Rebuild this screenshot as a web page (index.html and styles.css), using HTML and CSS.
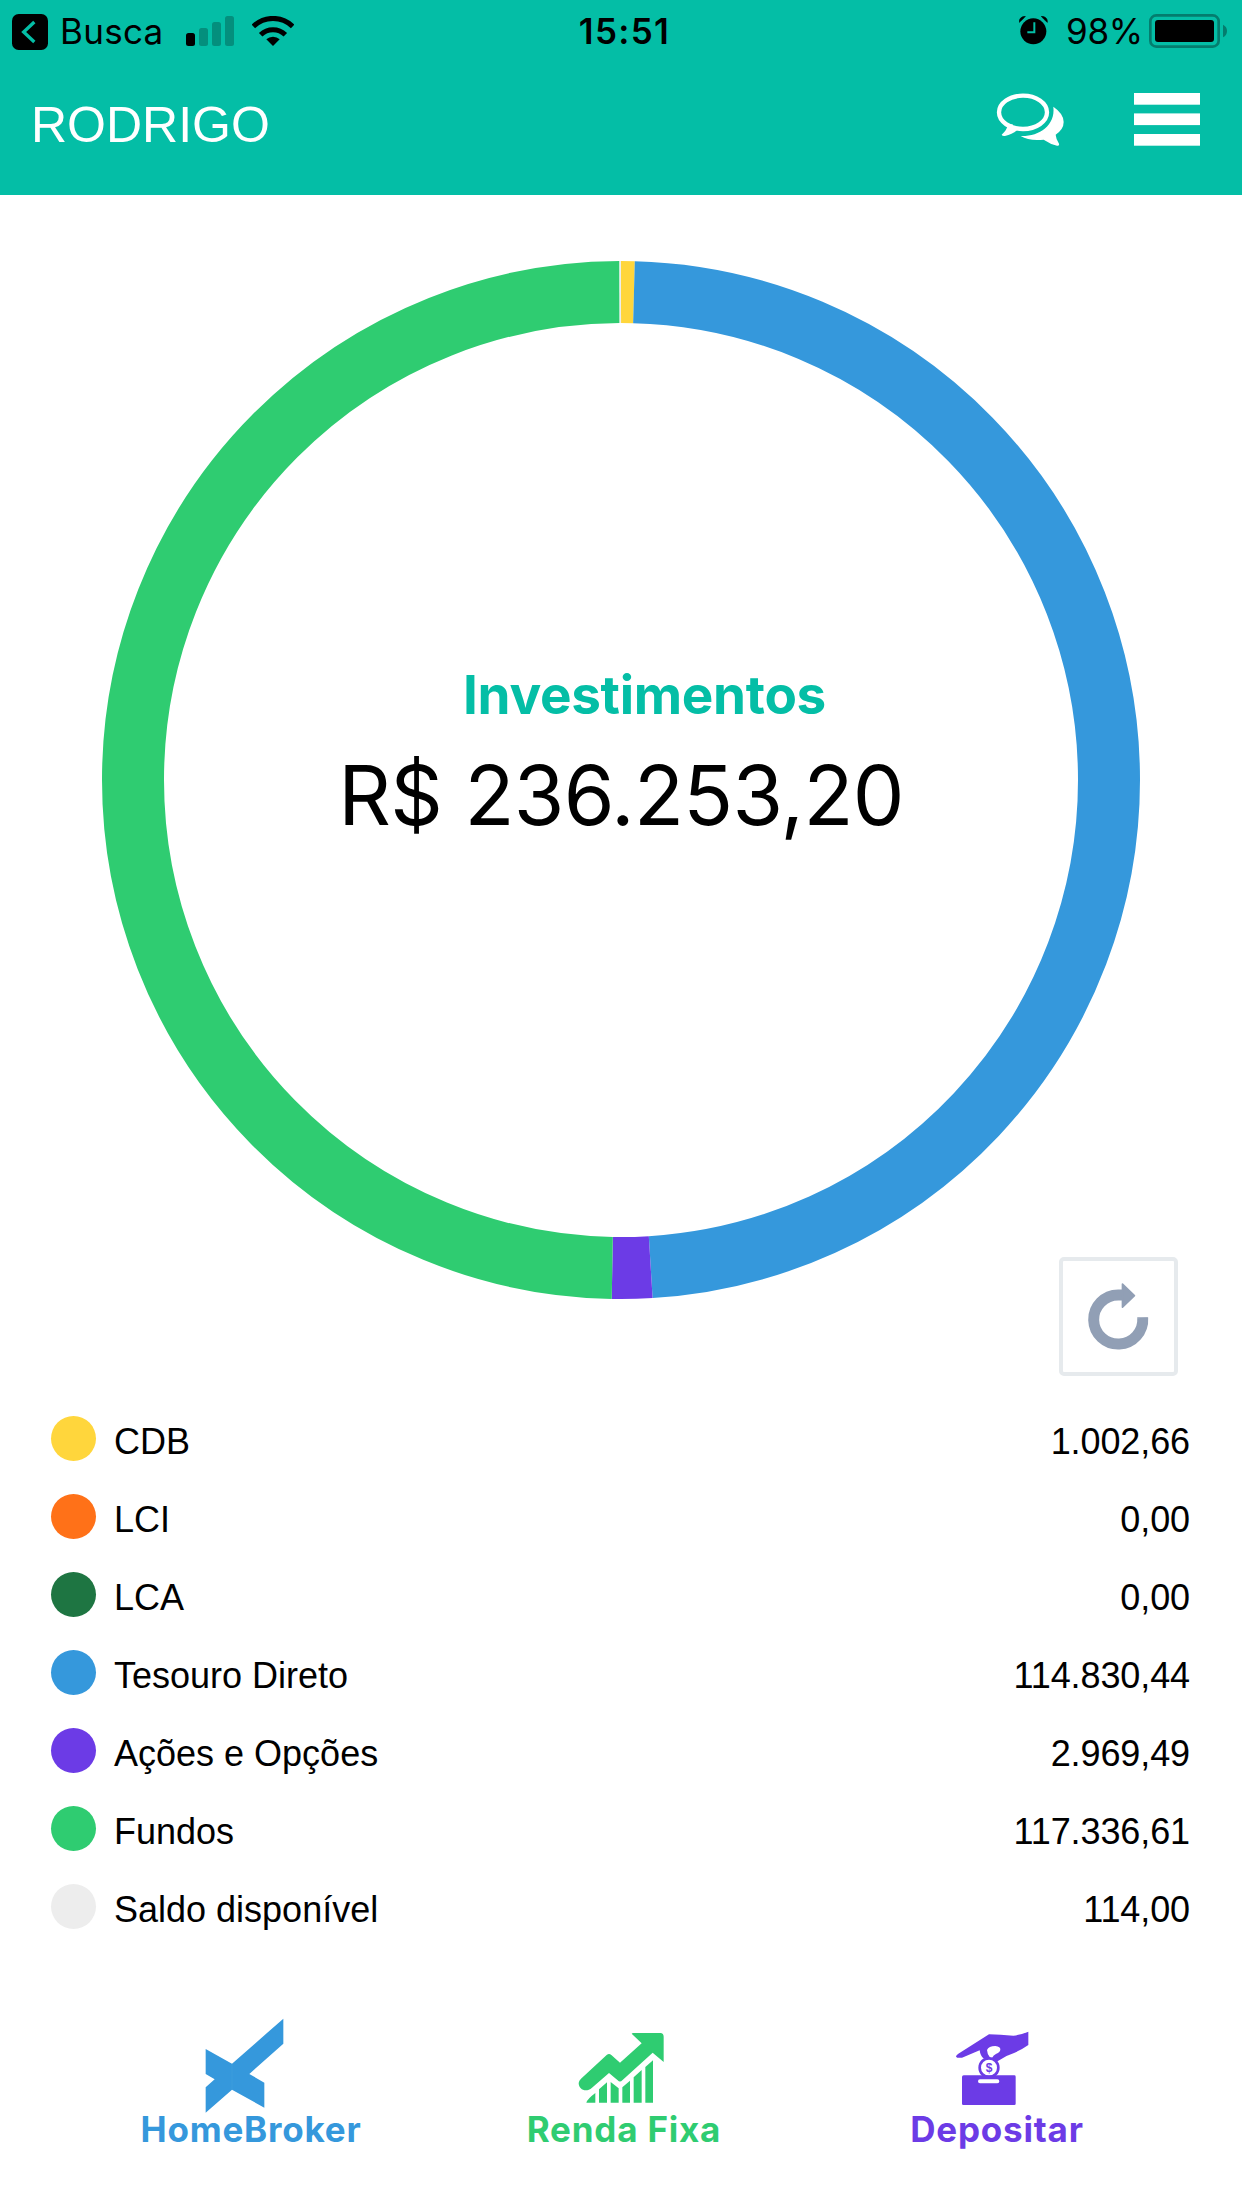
FILE: index.html
```html
<!DOCTYPE html>
<html lang="pt-BR">
<head>
    <meta charset="UTF-8">
    <meta name="viewport" content="width=device-width, initial-scale=1.0">
    <title>Investimentos</title>
    <link rel="stylesheet" href="styles.css">
</head>
<body>

    <!-- Topo -->
    <header class="header">
        <div class="status">
            <div class="status-left">
                <svg class="back" viewBox="0 0 108 108">
                    <rect width="108" height="108" rx="20"/>
                    <path d="M67 24L35 54L67 84" fill="none" stroke="#04bea6" stroke-width="10"/>
                </svg>
                <span class="back-text">Busca</span>
                <svg class="signal" viewBox="0 0 48 30">
                    <rect y="17" width="9" height="13" rx="2.5"/>
                    <g fill="#048f7d">
                        <rect x="13" y="12" width="9" height="18" rx="2.5"/>
                        <rect x="26" y="6" width="9" height="24" rx="2.5"/>
                        <rect x="39" y="0" width="9" height="30" rx="2.5"/>
                    </g>
                </svg>
                <svg class="wifi" viewBox="756 45 126 90">
                    <path d="M760 76A85 85 0 0 1 878 76M782 101A53 53 0 0 1 856 101" fill="none" stroke="#000" stroke-width="15"/>
                    <path d="M819 135L799 115A29 29 0 0 1 839 115Z"/>
                </svg>
            </div>
            <span class="time">15:51</span>
            <div class="status-right">
                <svg class="alarm" viewBox="206 47 87 87">
                    <circle cx="249" cy="93" r="39"/>
                    <path d="M207 66Q206 49 225 48Q218 57 207 66ZM291 66Q292 49 273 48Q280 57 291 66Z" stroke="#000" stroke-width="2"/>
                    <path d="M252 66V96H231" fill="none" stroke="#04bea6" stroke-width="6"/>
                </svg>
                <span class="percent">98%</span>
                <svg class="battery" viewBox="597 39 234 102">
                    <rect x="601" y="43" width="205" height="94" rx="18" fill="none" stroke="#047d6e" stroke-width="8"/>
                    <rect x="615" y="57" width="177" height="66" rx="9"/>
                    <path d="M819 71Q831 77 831 90Q831 103 819 109Z" fill="#047d6e"/>
                </svg>
            </div>
        </div>
        <div class="topbar">
            <h1>RODRIGO</h1>
            <svg class="chat" viewBox="126 270 240 180" fill="#fff">
                <ellipse cx="219" cy="340" rx="72" ry="50" fill="none" stroke="#fff" stroke-width="13"/>
                <path d="M174 376Q171 394 155 407Q157 412 165 411Q186 407 201 394L189 384L188 376Z"/>
                <path d="M310 323Q341 344 341 369Q341 391 317 407Q318 421 327 434Q329 440 321 440Q302 436 281 422Q238 427 212 411C265 413 317 381 310 323Z"/>
            </svg>
            <svg class="menu" viewBox="0 0 66 53" fill="#fff">
                <rect width="66" height="11.7"/>
                <rect y="20.4" width="66" height="11.7"/>
                <rect y="41" width="66" height="11.7"/>
            </svg>
        </div>
    </header>

    <!-- Gráfico -->
    <main class="chart">
        <svg class="donut" viewBox="-519 -519 1038 1038">
            <g fill="none" stroke-width="62" transform="rotate(-90)">
                <circle r="488" pathLength="236253.2" stroke="#ffd63c" stroke-dasharray="1002.66 236253.2"/>
                <circle r="488" pathLength="236253.2" stroke="#3598dc" stroke-dasharray="114830.44 236253.2" stroke-dashoffset="-1002.66"/>
                <circle r="488" pathLength="236253.2" stroke="#6c3be6" stroke-dasharray="2969.49 236253.2" stroke-dashoffset="-115833.1"/>
                <circle r="488" pathLength="236253.2" stroke="#2fcc71" stroke-dasharray="117336.61 236253.2" stroke-dashoffset="-118802.59"/>
                <circle r="488" pathLength="236253.2" stroke="#ededed" stroke-dasharray="114 236253.2" stroke-dashoffset="-236139.2"/>
            </g>
        </svg>
        <div class="total">
            <h2>Investimentos</h2>
            <p>R$ 236.253,20</p>
        </div>
        <button class="refresh" aria-label="Atualizar">
            <svg viewBox="166 150 200 220">
                <path d="M339 264A74 74 0 1 1 265 195H280" fill="none" stroke="#919fb5" stroke-width="33"/>
                <path d="M324 264H353" stroke="#919fb5" stroke-width="4" stroke-linecap="round"/>
                <path d="M278 162L314 197L278 232Z" fill="#919fb5" stroke="#919fb5" stroke-width="5" stroke-linejoin="round"/>
            </svg>
        </button>
    </main>

    <!-- Lista -->
    <ul class="list">
        <li><i class="dot cdb"></i><span>CDB</span><b>1.002,66</b></li>
        <li><i class="dot lci"></i><span>LCI</span><b>0,00</b></li>
        <li><i class="dot lca"></i><span>LCA</span><b>0,00</b></li>
        <li><i class="dot tesouro"></i><span>Tesouro Direto</span><b>114.830,44</b></li>
        <li><i class="dot acoes"></i><span>Ações e Opções</span><b>2.969,49</b></li>
        <li><i class="dot fundos"></i><span>Fundos</span><b>117.336,61</b></li>
        <li><i class="dot saldo"></i><span>Saldo disponível</span><b>114,00</b></li>
    </ul>

    <!-- Menu inferior -->
    <nav class="nav">
        <a class="homebroker">
            <svg viewBox="213 42 360 300">
                <path d="M257 147L336 191L490 56V131L388 222L433 248V323L336 269L257 338V262L284 238L257 222Z"/>
                <path d="M336 191V269" stroke="#4aa3e0"/>
            </svg>
            <span>HomeBroker</span>
        </a>
        <a class="renda">
            <svg viewBox="162 42 360 300">
                <path d="M213 236L290 165Q297 159 304 165L330 188L395 130L365 101Q366 99 370 99H451Q461 100 461 110V186L428 158L337 241Q330 248 323 241L297 219L246 263C229 279 206 269 206 249Q207 241 213 236Z"/>
                <path d="M229 308Q232 297 256 279V308ZM267 308V268L291 247V308ZM302 308V246L326 265V308ZM337 308V262L360 242V308ZM371 308V232L395 210V308ZM406 308V201L429 181V308Z"/>
            </svg>
            <span>Renda Fixa</span>
        </a>
        <a class="depositar">
            <svg viewBox="141 42 360 300">
                <path d="M198 170Q198 165 205 161L297 103Q330 104 370 107Q394 104 415 95V135Q395 149 374 158Q347 166 320 185L299 180L280 175Q271 167 269 151L216 173Q201 175 198 170Z"/>
                <path d="M301 174Q291 162 291 150Q296 138 316 138Q332 140 331 149Q330 157 319 161Q310 165 306 174Z" fill="#fff"/>
                <circle cx="297" cy="203" r="28" fill="#fff" stroke="#6c3be6" stroke-width="8"/>
                <text x="297" y="216" class="coin">$</text>
                <path fill-rule="evenodd" d="M221 226H373Q377 226 377 230V311Q377 315 373 315H220Q216 315 216 311V231Q216 226 221 226ZM270 238Q264 238 264 244Q264 250 270 250H322Q328 250 328 244Q328 238 322 238Z"/>
            </svg>
            <span>Depositar</span>
        </a>
    </nav>

</body>
</html>
```
FILE: styles.css
```css
/* Estilo global */
* {
    margin: 0;
    padding: 0;
    box-sizing: border-box;
}

body {
    font-family: Inter, "Liberation Sans", sans-serif;
    background-color: #fff;
    color: #000;
    width: 1242px;
    height: 2208px;
    overflow: hidden;
}

svg {
    display: block;
    flex-shrink: 0;
}

/* Topo */
.header {
    height: 195px;
    background-color: #04bea6;
}

.status {
    display: grid;
    grid-template-columns: 1fr auto 1fr;
    align-items: center;
    height: 62px;
    padding: 0 15px 0 12px;
    font-size: 35px;
    line-height: 62px;
}

.status-left,
.status-right {
    display: flex;
    align-items: center;
}

.status-right {
    justify-content: flex-end;
}

.back {
    width: 36px;
    height: 36px;
    margin: 2px 12px 0 0;
}

.back-text {
    width: 126px;
    letter-spacing: 0.3px;
}

.signal {
    width: 48px;
    height: 30px;
    margin-right: 18px;
}

.wifi {
    width: 42px;
    height: 30px;
}

.time {
    font-weight: 600;
    letter-spacing: 1.3px;
    padding-left: 10px;
}

.alarm {
    width: 29px;
    height: 29px;
    margin: 0 18px 2px 0;
}

.percent {
    margin-right: 6px;
    letter-spacing: -0.2px;
}

.battery {
    width: 78px;
    height: 34px;
}

.topbar {
    display: flex;
    align-items: center;
    height: 114px;
    padding: 0 42px 0 31px;
}

.topbar h1 {
    flex: 1;
    font: 50px "Liberation Sans", Arial, sans-serif;
    color: #fff;
    padding-top: 11px;
}

.chat {
    width: 80px;
    height: 60px;
    margin-right: 62px;
}

.menu {
    width: 66px;
    height: 53px;
}

/* Gráfico */
.chart {
    position: relative;
    height: 1207px;
    padding: 66px 102px 0;
}

.donut {
    width: 1038px;
    height: 1038px;
}

.total {
    position: absolute;
    top: 464px;
    left: 0;
    width: 100%;
    text-align: center;
}

.total h2 {
    font-size: 53px;
    font-weight: 700;
    line-height: 72px;
    letter-spacing: -0.3px;
    padding-left: 47px;
    color: #04bea6;
}

.total p {
    font-size: 82px;
    line-height: 130px;
    letter-spacing: -0.7px;
}

.refresh {
    position: absolute;
    top: 1062px;
    right: 64px;
    display: flex;
    align-items: center;
    justify-content: center;
    width: 119px;
    height: 119px;
    background-color: #fff;
    border: 4px solid #e6eaed;
    border-radius: 5px;
}

.refresh svg {
    width: 67px;
    height: 73px;
}

/* Lista */
.list {
    list-style: none;
    padding: 0 52px 0 51px;
    font: 36px "Liberation Sans", Arial, sans-serif;
}

.list li {
    display: flex;
    align-items: center;
    height: 78px;
}

.list span {
    flex: 1;
    padding-top: 2px;
}

.list b {
    font-weight: normal;
    padding-top: 2px;
    letter-spacing: -0.1px;
}

.dot {
    width: 45px;
    height: 45px;
    margin: 0 18px 6px 0;
    border-radius: 50%;
}

.cdb { background-color: #ffd63c; }
.lci { background-color: #ff7118; }
.lca { background-color: #1e7542; }
.tesouro { background-color: #3598dc; }
.acoes { background-color: #6c3be6; }
.fundos { background-color: #2fcc71; }
.saldo { background-color: #ededed; }

/* Menu inferior */
.nav {
    display: grid;
    grid-template-columns: repeat(3, 373px);
    justify-content: center;
    padding: 66px 0 0 6px;
}

.nav a {
    display: flex;
    flex-direction: column;
    align-items: center;
    font-size: 35px;
    font-weight: 700;
    line-height: 30px;
    letter-spacing: 0.8px;
}

.nav svg {
    width: 120px;
    height: 100px;
    fill: currentColor;
}

.coin {
    font: bold 36px "Liberation Sans", Arial, sans-serif;
    letter-spacing: 0;
    text-anchor: middle;
}

.homebroker { color: #3598dc; }
.renda { color: #2fcc71; }
.depositar { color: #6c3be6; }
```
